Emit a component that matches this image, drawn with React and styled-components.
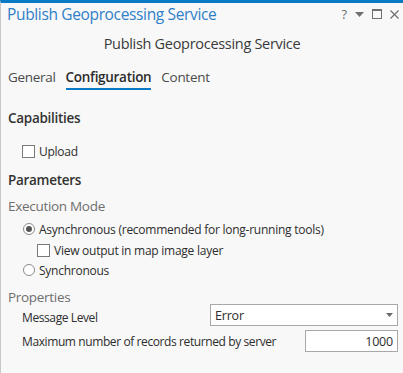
import React from 'react'
import styled, { createGlobalStyle } from 'styled-components'

const Global = createGlobalStyle`
  html, body { margin: 0; padding: 0; background: #f8f8f8; }
  body { font-family: "Open Sans", "Noto Sans", sans-serif; color: #323232; }
`

const Pane = styled.div`
  width: 403px;
  height: 373px;
  box-sizing: border-box;
  border-top: 3px solid #0a79c6;
  border-left: 1px solid #c8c8c8;
  background: #f8f8f8;
  overflow: hidden;
`

const TitleBar = styled.div`
  display: flex;
  align-items: center;
  justify-content: space-between;
  height: 22px;
  padding: 0 4px 0 6px;
`

const PaneTitle = styled.div`
  font-size: 15.5px;
  color: #2f7fc8;
  letter-spacing: -0.35px;
`

const Controls = styled.div`
  display: flex;
  align-items: center;
  gap: 8px;
  color: #707070;
  font-size: 13px;
`

const Heading = styled.div`
  text-align: center;
  font-size: 14.5px;
  color: #3a3a3a;
  margin-top: 9px;
  letter-spacing: -0.3px;
`

const Tabs = styled.div`
  display: flex;
  gap: 10px;
  padding: 0 7px;
  margin-top: 15px;
`

const Tab = styled.div`
  font-size: 13.5px;
  letter-spacing: -0.3px;
  color: ${p => (p.$active ? '#2b2b2b' : '#4a4a4a')};
  font-weight: ${p => (p.$active ? 600 : 400)};
  padding-bottom: 2px;
  border-bottom: 2px solid ${p => (p.$active ? '#0a79c6' : 'transparent')};
`

const Body = styled.div`
  padding: 0 7px;
`

const Section = styled.div`
  font-size: 13.5px;
  font-weight: 600;
  letter-spacing: -0.3px;
  color: #323232;
  margin-top: ${p => p.$top}px;
`

const SubHead = styled.div`
  font-size: 13.5px;
  letter-spacing: -0.3px;
  color: #6e6e6e;
  margin-top: ${p => p.$top}px;
`

const Option = styled.div`
  display: flex;
  align-items: center;
  gap: 4px;
  font-size: 12px;
  letter-spacing: -0.25px;
  color: #2d2d2d;
  margin-left: ${p => p.$indent}px;
  margin-top: ${p => p.$top}px;
  height: 18px;
`

const Box = styled.span`
  width: 11px;
  height: 11px;
  border: 1px solid #7a7a7a;
  background: #fff;
  flex: none;
`

const Radio = styled.span`
  width: 10px;
  height: 10px;
  border-radius: 50%;
  border: 1px solid #8a8a8a;
  background: #fff;
  flex: none;
  display: flex;
  align-items: center;
  justify-content: center;
  &::after {
    content: '';
    width: 6px;
    height: 6px;
    border-radius: 50%;
    background: ${p => (p.$on ? '#555' : 'transparent')};
  }
`

const PropRow = styled.div`
  display: flex;
  align-items: center;
  justify-content: space-between;
  padding-left: 21px;
  padding-right: 5px;
  margin-top: ${p => p.$top}px;
  font-size: 12px;
  letter-spacing: -0.4px;
  color: #2d2d2d;
`

const Label = styled.span`
  padding-top: ${p => p.$drop || 0}px;
`

const Field = styled.div`
  box-sizing: border-box;
  width: ${p => p.$w}px;
  height: 22px;
  border: 1px solid #a8a8a8;
  background: #fff;
  display: flex;
  align-items: center;
  justify-content: ${p => (p.$right ? 'flex-end' : 'space-between')};
  padding: 0 4px;
  font-size: 12.5px;
  letter-spacing: -0.2px;
  color: #2d2d2d;
`

const Caret = () => (
  <svg width="7" height="4" viewBox="0 0 7 4">
    <path d="M0 0h7L3.5 4z" fill="#6a6a6a" />
  </svg>
)

export default function App() {
  return (
    <>
      <Global />
      <Pane>
        <TitleBar>
          <PaneTitle>Publish Geoprocessing Service</PaneTitle>
          <Controls>
            <span>?</span>
            <svg width="9" height="5" viewBox="0 0 9 5"><path d="M0 0h9L4.5 5z" fill="#707070" /></svg>
            <svg width="10" height="10" viewBox="0 0 10 10">
              <rect x="0.5" y="0.5" width="9" height="9" fill="none" stroke="#707070" />
              <rect x="0.5" y="0.5" width="9" height="1.5" fill="#707070" />
            </svg>
            <svg width="9" height="9" viewBox="0 0 9 9">
              <path d="M0.5 0.5l8 8M8.5 0.5l-8 8" stroke="#707070" strokeWidth="1.2" />
            </svg>
          </Controls>
        </TitleBar>
        <Heading>Publish Geoprocessing Service</Heading>
        <Tabs>
          <Tab>General</Tab>
          <Tab $active>Configuration</Tab>
          <Tab>Content</Tab>
        </Tabs>
        <Body>
          <Section $top={19}>Capabilities</Section>
          <Option $indent={14} $top={15}>
            <Box />
            Upload
          </Option>
          <Section $top={11}>Parameters</Section>
          <SubHead $top={8}>Execution Mode</SubHead>
          <Option $indent={15} $top={5}>
            <Radio $on />
            Asynchronous (recommended for long-running tools)
          </Option>
          <Option $indent={29} $top={3}>
            <Box />
            View output in map image layer
          </Option>
          <Option $indent={15} $top={2}>
            <Radio />
            Synchronous
          </Option>
          <SubHead $top={9}>Properties</SubHead>
        </Body>
        <PropRow $top={-2}>
          <Label $drop={4}>Message Level</Label>
          <Field $w={188}>
            Error
            <Caret />
          </Field>
        </PropRow>
        <PropRow $top={4}>
          <Label>Maximum number of records returned by server</Label>
          <Field $w={93} $right>1000</Field>
        </PropRow>
      </Pane>
    </>
  )
}
